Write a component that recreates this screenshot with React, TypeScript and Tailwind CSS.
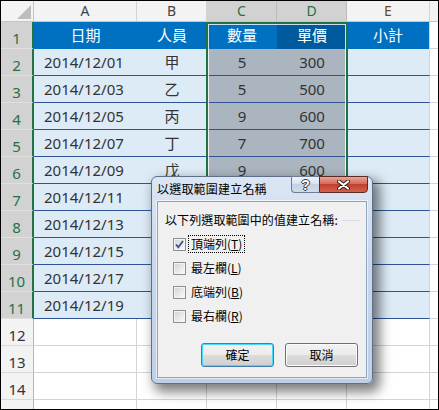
import type { ReactNode } from "react";

const sheetFont = "font-['Noto_Sans','Noto_Sans_CJK_TC',sans-serif]";
const uiFont = "font-['Noto_Sans_CJK_TC','Noto_Sans',sans-serif]";

const data = [
  ["2014/12/01", "甲", "5", "300"],
  ["2014/12/03", "乙", "5", "500"],
  ["2014/12/05", "丙", "9", "600"],
  ["2014/12/07", "丁", "7", "700"],
  ["2014/12/09", "戊", "9", "600"],
  ["2014/12/11", "", "", ""],
  ["2014/12/13", "", "", ""],
  ["2014/12/15", "", "", ""],
  ["2014/12/17", "", "", ""],
  ["2014/12/19", "", "", ""],
];

function ColumnHeaders() {
  return (
    <div className="flex h-[21px] border-b border-[#c6c6c6] text-[14px] leading-[20px]">
      <div className="relative w-[33px] shrink-0 border-r border-[#c6c6c6] bg-[#f3f3f3]">
        <svg className="absolute right-[2px] bottom-[2px]" width="14" height="14" viewBox="0 0 14 14">
          <polygon points="14,0 14,14 0,14" fill="#bdbdbd" />
        </svg>
      </div>
      <div className="flex w-[103px] shrink-0 items-center justify-center border-r border-[#d4d4d4] bg-[#f3f3f3] text-[#444]">A</div>
      <div className="flex w-[70px] shrink-0 items-center justify-center border-r border-[#d4d4d4] bg-[#f3f3f3] text-[#444]">B</div>
      <div className="flex w-[70px] shrink-0 items-center justify-center border-r border-[#bcbcbc] bg-[#d2d2d2] text-[#217346]">C</div>
      <div className="flex w-[70px] shrink-0 items-center justify-center border-r border-[#bcbcbc] bg-[#d2d2d2] text-[#217346]">D</div>
      <div className="flex w-[83px] shrink-0 items-center justify-center border-r border-[#d4d4d4] bg-[#f3f3f3] text-[#6b4a2a]">E</div>
      <div className="flex-1 bg-[#f3f3f3]" />
    </div>
  );
}

function RowHead({ n, selected }: { n?: number; selected: boolean }) {
  return selected ? (
    <div className="flex w-[33px] shrink-0 items-end justify-center border-r-2 border-b border-r-[#217346] border-b-[#e0e0e0] bg-[#d2d2d2] leading-[20px] text-[#217346]">
      {n}
    </div>
  ) : (
    <div className="flex w-[33px] shrink-0 items-end justify-center border-r border-b border-r-[#b4b4b4] border-b-[#d9d9d9] bg-[#f3f3f3] leading-[20px] text-[#333]">
      {n}
    </div>
  );
}

function HeaderRow() {
  return (
    <div className="flex h-[27px]">
      <RowHead n={1} selected />
      <div className="flex w-[103px] shrink-0 items-center justify-center bg-[#0070c0] text-white">日期</div>
      <div className="flex w-[70px] shrink-0 items-center justify-center bg-[#0070c0] text-white">人員</div>
      <div className="flex w-[70px] shrink-0 items-center justify-center bg-[#0070c0] text-white">數量</div>
      <div className="flex w-[70px] shrink-0 items-center justify-center bg-[#005a9e] text-white">單價</div>
      <div className="flex w-[83px] shrink-0 items-center justify-center border-r border-[#d4d4d4] bg-[#0070c0] text-white">小計</div>
      <div className="flex-1 border-b border-[#d4d4d4]" />
    </div>
  );
}

function DataRow({ n, cells }: { n: number; cells: string[] }) {
  return (
    <div className="flex h-[27px]">
      <RowHead n={n} selected />
      <div className="flex w-[103px] shrink-0 items-center border-b border-[#2f5496] bg-[#ddebf7] pl-[10px] text-[#333]">
        {cells[0]}
      </div>
      <div className="flex w-[70px] shrink-0 items-center justify-center border-b border-[#2f5496] bg-[#ddebf7] text-[#333]">
        {cells[1]}
      </div>
      <div className="flex w-[70px] shrink-0 items-center justify-center border-b border-[#2f5496] bg-[#aab5c0] text-[#333]">
        {cells[2]}
      </div>
      <div className="flex w-[70px] shrink-0 items-center justify-center border-b border-[#2f5496] bg-[#aab5c0] text-[#333]">
        {cells[3]}
      </div>
      <div className="w-[83px] shrink-0 border-r border-b border-r-[#d4d4d4] border-b-[#2f5496] bg-[#ddebf7]" />
      <div className="flex-1 border-b border-[#d4d4d4]" />
    </div>
  );
}

function EmptyRow({ n }: { n?: number }) {
  return (
    <div className="flex h-[27px] shrink-0">
      <RowHead n={n} selected={false} />
      <div className="w-[103px] shrink-0 border-r border-b border-[#d4d4d4]" />
      <div className="w-[70px] shrink-0 border-r border-b border-[#d4d4d4]" />
      <div className="w-[70px] shrink-0 border-r border-b border-[#d4d4d4]" />
      <div className="w-[70px] shrink-0 border-r border-b border-[#d4d4d4]" />
      <div className="w-[83px] shrink-0 border-r border-b border-[#d4d4d4]" />
      <div className="flex-1 border-b border-[#d4d4d4]" />
    </div>
  );
}

function CheckBox({ checked }: { checked?: boolean }) {
  return (
    <span className="flex h-[13px] w-[13px] shrink-0 items-center justify-center border border-[#8e8f8f] bg-[#f4f4f4]">
      <span className="relative flex h-[9px] w-[9px] items-center justify-center bg-[linear-gradient(135deg,#d6d6d6,#f7f7f7)]">
        {checked && (
          <svg className="absolute -left-[1px] -top-[1px]" width="11" height="11" viewBox="0 0 11 11">
            <path d="M2 5.5 L4.3 8.2 L9 2" fill="none" stroke="#3d5391" strokeWidth="1.8" />
          </svg>
        )}
      </span>
    </span>
  );
}

function Option({ label, keyChar, checked, focused }: { label: string; keyChar: string; checked?: boolean; focused?: boolean }) {
  return (
    <div className="flex h-[24px] items-center gap-[2px]">
      <CheckBox checked={checked} />
      <span
        className={
          focused
            ? "flex h-[18px] items-center border border-dotted border-black px-[2px]"
            : "flex h-[18px] items-center border border-transparent px-[2px]"
        }
      >
        {label}(<span className="underline underline-offset-1">{keyChar}</span>)
      </span>
    </div>
  );
}

function WinButton({ children, primary }: { children: ReactNode; primary?: boolean }) {
  return (
    <button
      className={
        primary
          ? "flex h-[24px] w-[73px] items-center justify-center rounded-[3px] border border-[#3c7fb1] bg-[linear-gradient(#f2f2f2,#ebebeb_50%,#dddddd_50%,#cfcfcf)] text-[12px] text-black shadow-[inset_0_0_0_1px_#48d8fb]"
          : "flex h-[24px] w-[73px] items-center justify-center rounded-[3px] border border-[#707070] bg-[linear-gradient(#f2f2f2,#ebebeb_50%,#dddddd_50%,#cfcfcf)] text-[12px] text-black shadow-[inset_0_0_0_1px_#fcfcfc]"
      }
    >
      {children}
    </button>
  );
}

function Dialog() {
  return (
    <div
      className={`absolute left-[150px] top-[175px] flex h-[208px] w-[222px] flex-col rounded-[6px] border border-[#5e6f87] bg-[linear-gradient(#dbe6f4,#c9d8ed_40%,#bed0e8)] px-[5px] pb-[5px] shadow-[5px_6px_12px_2px_rgba(0,0,0,0.5)] ${uiFont}`}
    >
      <div className="flex h-[24px] shrink-0 items-center text-[12px] tracking-[0.2px] text-black">
        以選取範圍建立名稱
      </div>
      <div className="absolute right-[4px] top-[-1px] flex h-[17px]">
        <div className="flex w-[28px] items-center justify-center rounded-bl-[4px] border border-r-0 border-[#6e7d92] bg-[linear-gradient(#eef3f9,#d6e1ef_50%,#c3d2e6_50%,#cfdcec)] font-['Liberation_Sans',sans-serif] text-[14px] font-bold leading-none text-white [text-shadow:1px_0_0_#2b3545,-1px_0_0_#2b3545,0_1px_0_#2b3545,0_-1px_0_#2b3545]">
          ?
        </div>
        <div className="flex w-[49px] items-center justify-center rounded-br-[4px] border border-[#5a2a24] bg-[linear-gradient(#e9a497,#d7695a_45%,#c2402f_50%,#d3604d)]">
          <svg width="13" height="10" viewBox="0 0 13 10">
            <path d="M2 1.5 L11 8.5 M11 1.5 L2 8.5" stroke="#3b1a16" strokeWidth="4" strokeLinecap="round" />
            <path d="M2 1.5 L11 8.5 M11 1.5 L2 8.5" stroke="#ffffff" strokeWidth="2.2" strokeLinecap="round" />
          </svg>
        </div>
      </div>
      <div className="flex h-[177px] shrink-0 flex-col border border-[#8fa3bf] bg-[#f0f0f0] text-[12px] text-black shadow-[0_0_0_1px_rgba(255,255,255,0.6)]">
        <div className="mt-[10px] flex h-[16px] items-center pl-[7px] pr-[6px]">
          <span className="leading-[16px] tracking-[0.1px]">以下列選取範圍中的值建立名稱:</span>
          <span className="ml-[4px] h-px flex-1 bg-[#d5dfe5]" />
        </div>
        <div className="mt-[4px] flex flex-col pl-[15px]">
          <Option label="頂端列" keyChar="T" checked focused />
          <Option label="最左欄" keyChar="L" />
          <Option label="底端列" keyChar="B" />
          <Option label="最右欄" keyChar="R" />
        </div>
        <div className="mt-[15px] flex justify-end gap-[11px] pr-[8px]">
          <WinButton primary>確定</WinButton>
          <WinButton>取消</WinButton>
        </div>
      </div>
    </div>
  );
}

export default function App() {
  return (
    <div className={`h-[410px] w-[439px] overflow-hidden border border-black bg-white text-[15px] ${sheetFont}`}>
      <div className="relative h-full">
        <ColumnHeaders />
        <HeaderRow />
        {data.map((cells, i) => (
          <DataRow key={i} n={i + 2} cells={cells} />
        ))}
        {[12, 13, 14].map((n) => (
          <EmptyRow key={n} n={n} />
        ))}
        {/* row 15 is cut by the window edge, its number is not visible */}
        <EmptyRow />
        {/* selection frame around C1:D11 */}
        <div className="pointer-events-none absolute left-[205px] top-[21px] h-[298px] w-[142px] border-2 border-[#217346]">
          <div className="h-full w-full border border-white/80" />
        </div>
        <Dialog />
      </div>
    </div>
  );
}
